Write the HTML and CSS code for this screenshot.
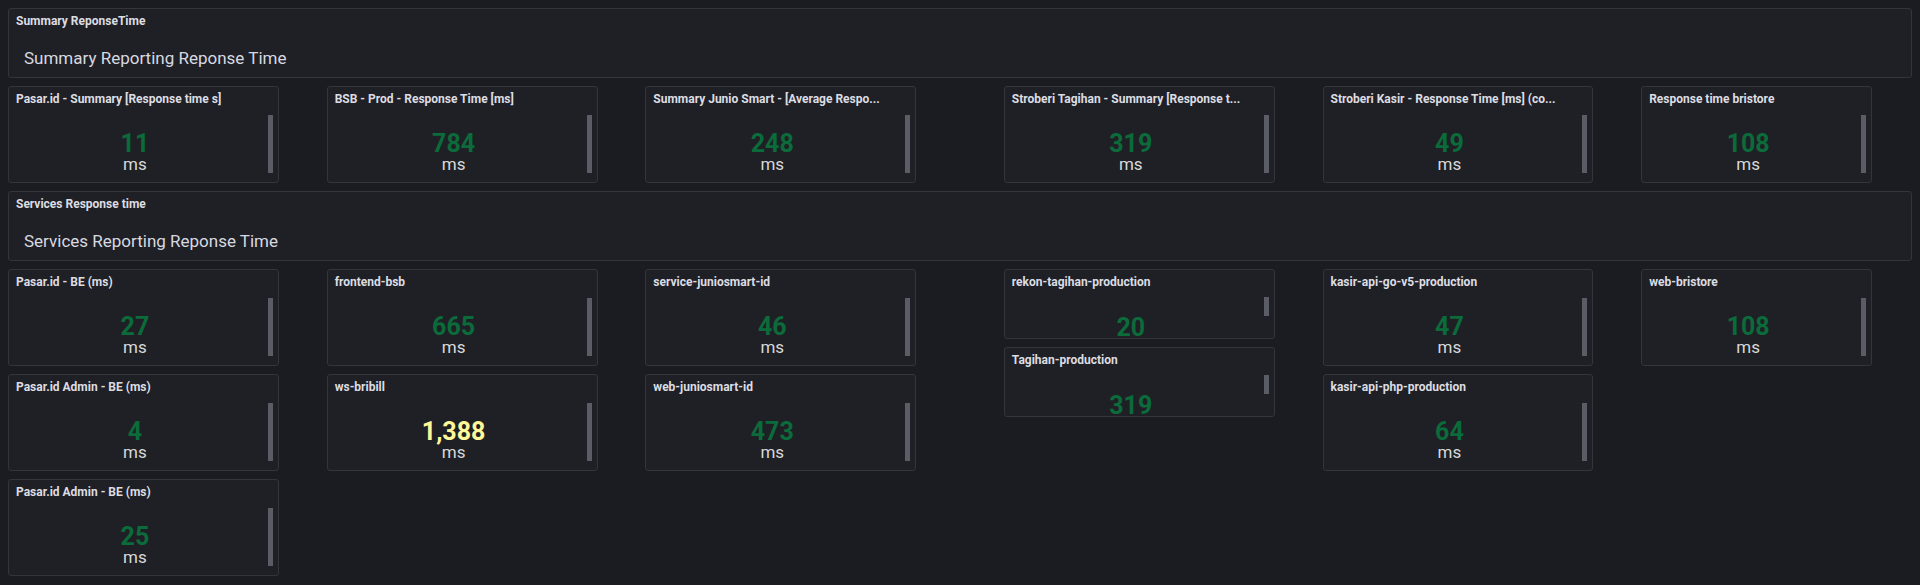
FILE: index.html
```html
<!DOCTYPE html>
<html lang="en">
<head>
<meta charset="utf-8">
<title>Response Time Dashboard</title>
<link rel="stylesheet" href="styles.css">
</head>
<body>
<main class="dashboard">
  <section class="panel text-panel">
    <h2 class="panel-title">Summary ReponseTime</h2>
    <p class="text-content">Summary Reporting Reponse Time</p>
  </section>

  <div class="grid">
    <div class="col col-a">
      <article class="panel stat">
        <h3 class="panel-title">Pasar.id - Summary [Response time s]</h3>
        <div class="stat-body"><div class="stat-value"><span class="num">11</span><span class="unit">ms</span></div><div class="stat-bar"></div></div>
      </article>
    </div>
    <div class="col col-b">
      <article class="panel stat">
        <h3 class="panel-title">BSB - Prod - Response Time [ms]</h3>
        <div class="stat-body"><div class="stat-value"><span class="num">784</span><span class="unit">ms</span></div><div class="stat-bar"></div></div>
      </article>
    </div>
    <div class="col col-c">
      <article class="panel stat">
        <h3 class="panel-title">Summary Junio Smart - [Average Respo...</h3>
        <div class="stat-body"><div class="stat-value"><span class="num">248</span><span class="unit">ms</span></div><div class="stat-bar"></div></div>
      </article>
    </div>
    <div class="col col-d">
      <article class="panel stat">
        <h3 class="panel-title">Stroberi Tagihan - Summary [Response t...</h3>
        <div class="stat-body"><div class="stat-value"><span class="num">319</span><span class="unit">ms</span></div><div class="stat-bar"></div></div>
      </article>
    </div>
    <div class="col col-e">
      <article class="panel stat">
        <h3 class="panel-title">Stroberi Kasir - Response Time [ms] (co...</h3>
        <div class="stat-body"><div class="stat-value"><span class="num">49</span><span class="unit">ms</span></div><div class="stat-bar"></div></div>
      </article>
    </div>
    <div class="col col-f">
      <article class="panel stat">
        <h3 class="panel-title">Response time bristore</h3>
        <div class="stat-body"><div class="stat-value"><span class="num">108</span><span class="unit">ms</span></div><div class="stat-bar"></div></div>
      </article>
    </div>
  </div>

  <section class="panel text-panel">
    <h2 class="panel-title">Services Response time</h2>
    <p class="text-content">Services Reporting Reponse Time</p>
  </section>

  <div class="grid">
    <div class="col col-a">
      <article class="panel stat">
        <h3 class="panel-title">Pasar.id - BE (ms)</h3>
        <div class="stat-body"><div class="stat-value"><span class="num">27</span><span class="unit">ms</span></div><div class="stat-bar"></div></div>
      </article>
      <article class="panel stat">
        <h3 class="panel-title">Pasar.id Admin - BE (ms)</h3>
        <div class="stat-body"><div class="stat-value"><span class="num">4</span><span class="unit">ms</span></div><div class="stat-bar"></div></div>
      </article>
      <article class="panel stat">
        <h3 class="panel-title">Pasar.id Admin - BE (ms)</h3>
        <div class="stat-body"><div class="stat-value"><span class="num">25</span><span class="unit">ms</span></div><div class="stat-bar"></div></div>
      </article>
    </div>
    <div class="col col-b">
      <article class="panel stat">
        <h3 class="panel-title">frontend-bsb</h3>
        <div class="stat-body"><div class="stat-value"><span class="num">665</span><span class="unit">ms</span></div><div class="stat-bar"></div></div>
      </article>
      <article class="panel stat">
        <h3 class="panel-title">ws-bribill</h3>
        <div class="stat-body"><div class="stat-value"><span class="num num--warn">1,388</span><span class="unit">ms</span></div><div class="stat-bar"></div></div>
      </article>
    </div>
    <div class="col col-c">
      <article class="panel stat">
        <h3 class="panel-title">service-juniosmart-id</h3>
        <div class="stat-body"><div class="stat-value"><span class="num">46</span><span class="unit">ms</span></div><div class="stat-bar"></div></div>
      </article>
      <article class="panel stat">
        <h3 class="panel-title">web-juniosmart-id</h3>
        <div class="stat-body"><div class="stat-value"><span class="num">473</span><span class="unit">ms</span></div><div class="stat-bar"></div></div>
      </article>
    </div>
    <div class="col col-d">
      <article class="panel stat stat--compact">
        <h3 class="panel-title">rekon-tagihan-production</h3>
        <div class="stat-body"><div class="stat-value"><span class="num">20</span></div><div class="stat-bar"></div></div>
      </article>
      <article class="panel stat stat--compact">
        <h3 class="panel-title">Tagihan-production</h3>
        <div class="stat-body"><div class="stat-value"><span class="num">319</span></div><div class="stat-bar"></div></div>
      </article>
    </div>
    <div class="col col-e">
      <article class="panel stat">
        <h3 class="panel-title">kasir-api-go-v5-production</h3>
        <div class="stat-body"><div class="stat-value"><span class="num">47</span><span class="unit">ms</span></div><div class="stat-bar"></div></div>
      </article>
      <article class="panel stat">
        <h3 class="panel-title">kasir-api-php-production</h3>
        <div class="stat-body"><div class="stat-value"><span class="num">64</span><span class="unit">ms</span></div><div class="stat-bar"></div></div>
      </article>
    </div>
    <div class="col col-f">
      <article class="panel stat">
        <h3 class="panel-title">web-bristore</h3>
        <div class="stat-body"><div class="stat-value"><span class="num">108</span><span class="unit">ms</span></div><div class="stat-bar"></div></div>
      </article>
    </div>
  </div>
</main>
</body>
</html>
```

FILE: styles.css
```css
* {
  box-sizing: border-box;
  margin: 0;
  padding: 0;
}

html,
body {
  background: #1b1c21;
}

body {
  font-family: Roboto, "Liberation Sans", sans-serif;
  color: #d8d9da;
  overflow: hidden;
}

.dashboard {
  display: flex;
  flex-direction: column;
  gap: 8px;
  padding: 8px;
}

.panel {
  background: #1f2025;
  border: 1px solid #34353b;
  border-radius: 3px;
  overflow: hidden;
}

.panel-title {
  flex-shrink: 0;
  font-size: 12px;
  line-height: 16px;
  font-weight: 700;
  color: #dcdde2;
  padding-left: 7px;
  white-space: nowrap;
  overflow: hidden;
}

.text-panel {
  height: 70px;
  padding-top: 4px;
}

.text-content {
  font-size: 17px;
  line-height: 20px;
  padding: 19px 0 0 15px;
  color: #d8d9e0;
}

.grid {
  display: grid;
  grid-template-columns: repeat(48, minmax(0, 1fr));
  column-gap: 8px;
  align-items: start;
}

.col {
  display: flex;
  flex-direction: column;
  gap: 8px;
}

.col-a { grid-column: 1 / span 7; }
.col-b { grid-column: 9 / span 7; }
.col-c { grid-column: 17 / span 7; }
.col-d { grid-column: 26 / span 7; }
.col-e { grid-column: 34 / span 7; }
.col-f { grid-column: 42 / span 6; }

.stat {
  height: 97px;
  display: flex;
  flex-direction: column;
  padding: 4px 5px 9px 0;
}

.stat-body {
  flex: 1;
  min-height: 0;
  display: flex;
  align-items: flex-end;
}

.stat-value {
  flex: 1;
  display: flex;
  flex-direction: column;
  align-items: center;
}

.num {
  font-size: 25px;
  line-height: 24px;
  font-weight: 700;
  color: #0b6b3a;
}

.num--warn {
  color: #fff899;
}

.unit {
  font-size: 17px;
  line-height: 17px;
  color: #d8d9da;
}

.stat-bar {
  width: 5px;
  height: 58px;
  margin-left: 7px;
  background: #5a5d66;
}

.stat--compact {
  height: 70px;
}

.stat--compact .stat-body {
  align-items: flex-start;
  padding-top: 7px;
}

.stat--compact .stat-bar {
  height: 19px;
}

.stat--compact .stat-value {
  padding-top: 19px;
}
```
